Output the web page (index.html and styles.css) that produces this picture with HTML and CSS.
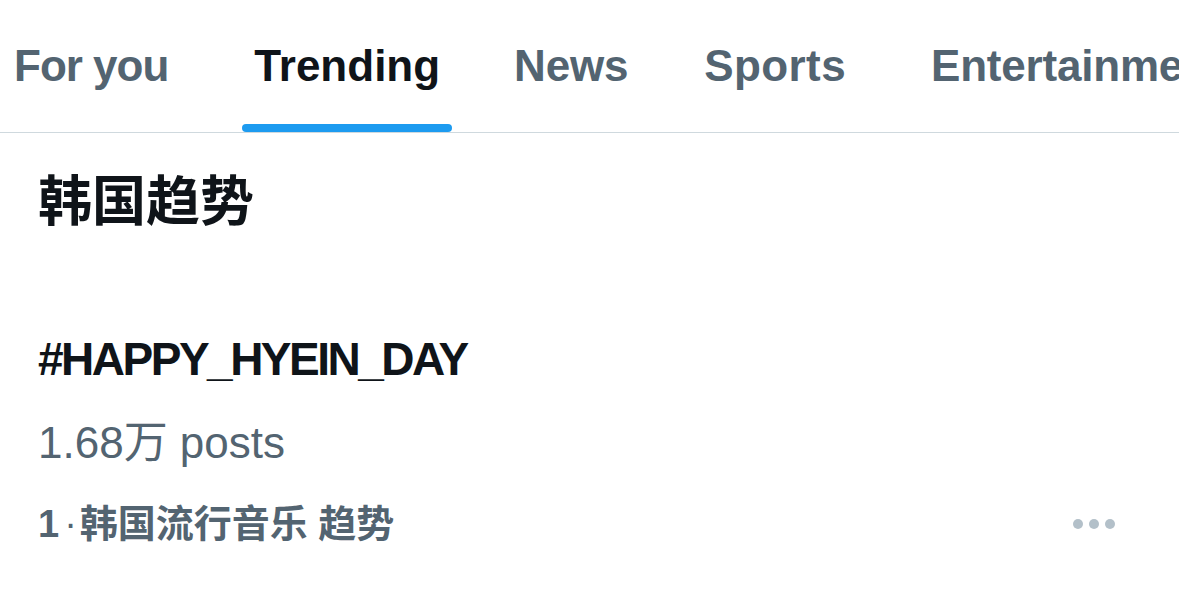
FILE: index.html
```html
<!DOCTYPE html>
<html lang="zh">
<head>
  <meta charset="UTF-8">
  <title>Trending</title>
  <link rel="stylesheet" href="styles.css">
</head>
<body>
  <!-- Вкладки -->
  <nav class="tabs">
    <a class="tab tab-foryou">For you</a>
    <a class="tab tab-trending active">Trending</a>
    <a class="tab tab-news">News</a>
    <a class="tab tab-sports">Sports</a>
    <a class="tab tab-ent">Entertainment</a>
  </nav>

  <main class="feed">
    <h2 class="section-title">韩国趋势</h2>

    <div class="trend">
      <div class="trend-tag">#HAPPY_HYEIN_DAY</div>
      <div class="trend-count">1.68万 posts</div>
      <div class="trend-meta">
        <span class="trend-rank">1<span class="dot">·</span>韩国流行音乐 趋势</span>
        <span class="more"><i></i><i></i><i></i></span>
      </div>
    </div>
  </main>
</body>
</html>
```

FILE: styles.css
```css
* {
  margin: 0;
  padding: 0;
  box-sizing: border-box;
}

html, body {
  background: #fff;
  overflow: hidden;
}

body {
  font-family: "Liberation Sans", "Noto Sans CJK SC", sans-serif;
  color: #0f1419;
  width: 1179px;
  height: 606px;
}

/* Вкладки */
.tabs {
  display: flex;
  height: 133px;
  padding-left: 14px;
  border-bottom: 1px solid #cfd9de;
  white-space: nowrap;
  overflow: hidden;
}

.tab {
  position: relative;
  display: flex;
  align-items: center;
  flex: none;
  font-size: 44px;
  font-weight: 700;
  color: #536471;
  letter-spacing: -0.2px;
}

.tab-foryou { letter-spacing: -1px; }
.tab-trending {
  margin-left: 74px;
  padding: 0 12px;
  letter-spacing: 0;
}
.tab-news { margin-left: 62px; }
.tab-sports {
  margin-left: 76px;
  letter-spacing: 0.4px;
}
.tab-ent { margin-left: 85px; }

.tab.active {
  color: #0f1419;
}

.tab.active::after {
  content: "";
  position: absolute;
  left: 0;
  right: 0;
  bottom: 0;
  height: 8px;
  border-radius: 4px;
  background: #1d9bf0;
}

/* Контент */
.feed {
  padding: 0 38px;
}

.section-title {
  font-family: "Noto Sans CJK SC", sans-serif;
  font-size: 54px;
  font-weight: 700;
  line-height: 1;
  margin-top: 38px;
}

.trend {
  margin-top: 111px;
}

.trend-tag {
  font-size: 46px;
  font-weight: 700;
  letter-spacing: -2.5px;
  line-height: 1;
}

.trend-count {
  margin-top: 39px;
  font-size: 44px;
  color: #536471;
  line-height: 1;
}

.trend-meta {
  display: flex;
  justify-content: space-between;
  align-items: center;
  margin-top: 40px;
}

.trend-rank {
  font-size: 38px;
  font-weight: 700;
  color: #536471;
  line-height: 1;
}

.trend-rank .dot {
  font-weight: 400;
  margin: 0 3px 0 5px;
}

.more {
  display: flex;
  gap: 6px;
  margin-right: 26px;
}

.more i {
  width: 10px;
  height: 10px;
  border-radius: 50%;
  background: #b3c0c9;
}
```
